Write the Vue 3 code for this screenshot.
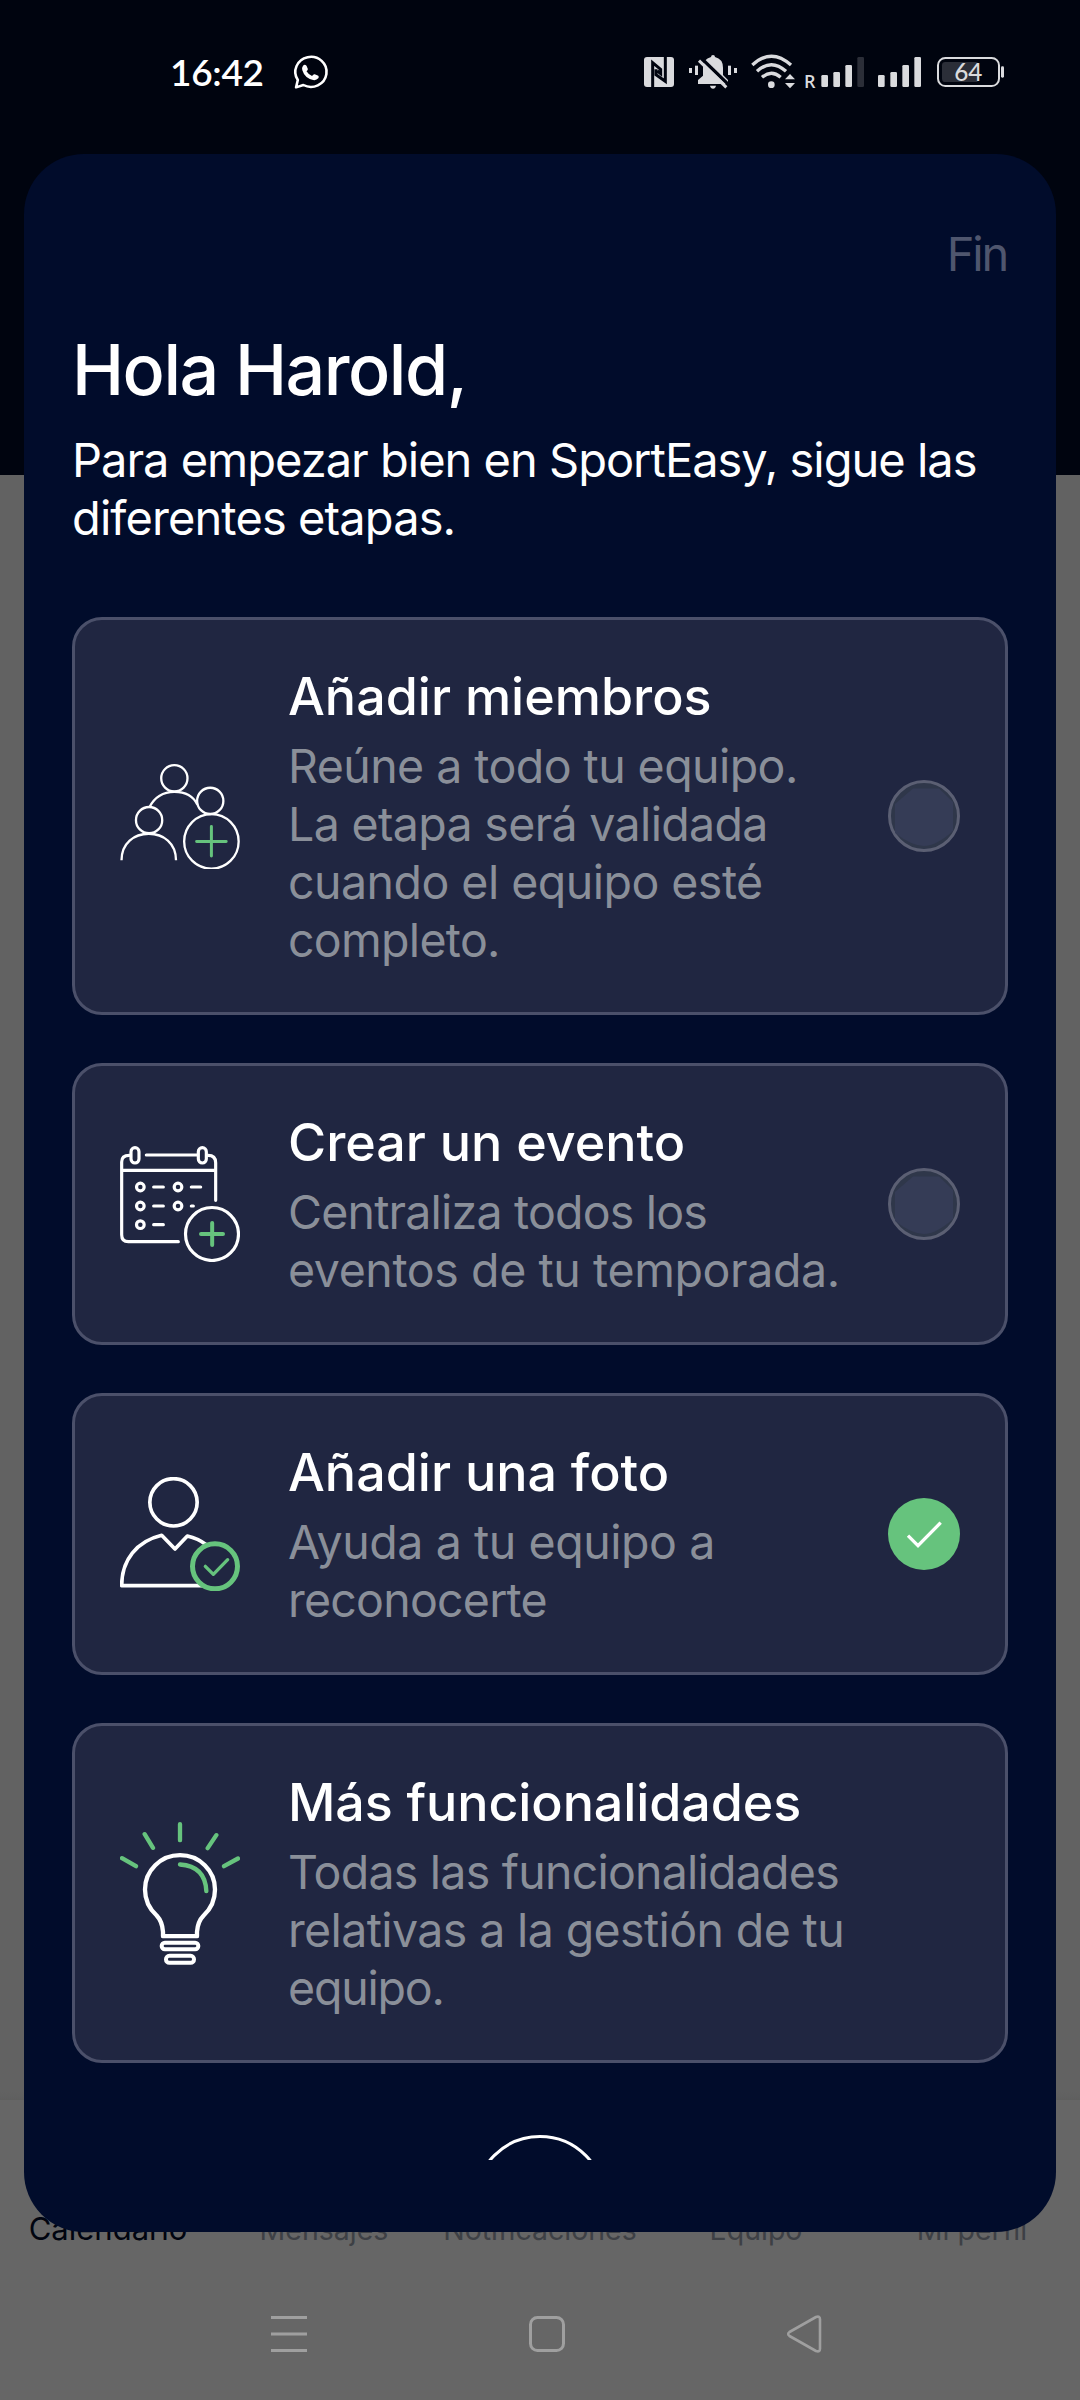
<script setup>
const steps = [
  {
    icon: 'members',
    title: { text: 'Añadir miembros', ls: 0 },
    lines: [
      { text: 'Reúne a todo tu equipo.', ls: -0.56 },
      { text: 'La etapa será validada', ls: -0.66 },
      { text: 'cuando el equipo esté', ls: -0.53 },
      { text: 'completo.', ls: -0.7 }
    ],
    state: 'todo'
  },
  {
    icon: 'event',
    title: { text: 'Crear un evento', ls: 0 },
    lines: [
      { text: 'Centraliza todos los', ls: -0.8 },
      { text: 'eventos de tu temporada.', ls: -0.4 }
    ],
    state: 'todo'
  },
  {
    icon: 'photo',
    title: { text: 'Añadir una foto', ls: 0 },
    lines: [
      { text: 'Ayuda a tu equipo a', ls: -0.43 },
      { text: 'reconocerte', ls: -0.77 }
    ],
    state: 'done'
  },
  {
    icon: 'more',
    title: { text: 'Más funcionalidades', ls: -0.1 },
    lines: [
      { text: 'Todas las funcionalidades', ls: -0.77 },
      { text: 'relativas a la gestión de tu', ls: -0.62 },
      { text: 'equipo.', ls: -1.2 }
    ],
    state: 'none'
  }
]
const tabs = ['Calendario', 'Mensajes', 'Notificaciones', 'Equipo', 'Mi perfil']
const spacing = (line) => ({ letterSpacing: line.ls + 'px' })
</script>

<template>
  <div class="screen">
    <header class="top">
      <div class="status">
        <span class="clock">16:42</span>
        <svg class="whatsapp" viewBox="855 165 98 102" width="34" height="34" preserveAspectRatio="none">
          <path d="M861 262 L866 240 A45 45 0 1 1 882 255 Z" fill="none" stroke="#fff" stroke-width="7.5" stroke-linejoin="round" />
          <path d="M881 197 q5 -5 10 0 l4 10 q0 4 -4 7 q6 10 16 14 q4 -6 8 -5 l10 4 q3 3 0 8 q-6 7 -15 5 q-24 -5 -31 -29 q-2 -9 2 -14z" fill="#fff" />
        </svg>
        <div class="indicators">
          <svg class="nfc" viewBox="132 72 90 108" width="30" height="36">
            <rect x="132" y="81" width="90" height="90" rx="9" fill="#dadbde" />
            <path d="M158 171 V98 L182 118 V131 L172 123 M196 81 V154 L168 134 V118" fill="none" stroke="#00040f" stroke-width="9" />
          </svg>
          <svg class="bell" viewBox="267 72 144 108" width="48" height="36">
            <g fill="#dadbde">
              <rect x="267" y="114" width="9" height="15" />
              <rect x="285" y="107" width="9" height="28" />
              <rect x="384" y="107" width="9" height="28" />
              <rect x="402" y="114" width="9" height="15" />
              <path d="M333 81 q0 -6 6 -6 q6 0 6 6 q24 6 24 32 v22 l15 15 v12 H294 v-12 l15 -13 v-24 q0 -26 24 -32z" />
              <path d="M330 167 h18 q-2 9 -9 9 t-9 -9z" />
            </g>
            <path d="M300 81 L388 166" stroke="#00040f" stroke-width="10" />
            <path d="M297 92 L379 172" stroke="#dadbde" stroke-width="9" />
          </svg>
          <svg class="wifi" viewBox="453 72 132 108" width="44" height="36">
            <g fill="none" stroke="#dadbde" stroke-width="10">
              <path d="M457 105 Q514 52 573 105" />
              <path d="M471 124 Q514 84 558 124" />
              <path d="M486 142 Q514 118 542 142" />
            </g>
            <circle cx="514" cy="164" r="10" fill="#dadbde" />
            <path d="M555 148 L570 132 L585 148z M555 159 H585 L570 175z" fill="#dadbde" />
          </svg>
          <svg class="bars-r" viewBox="612 72 180 108" width="60" height="36">
            <text x="612" y="175" class="roam">R</text>
            <g fill="#dadbde">
              <rect x="664" y="135" width="20" height="36" rx="4" />
              <rect x="700" y="126" width="20" height="45" rx="4" />
              <rect x="736" y="105" width="20" height="66" rx="4" />
            </g>
            <rect x="772" y="81" width="20" height="90" rx="4" fill="#2b2e38" />
          </svg>
          <svg class="bars" viewBox="834 72 129 108" width="43" height="36">
            <g fill="#dadbde">
              <rect x="834" y="135" width="20" height="36" rx="4" />
              <rect x="871" y="126" width="20" height="45" rx="4" />
              <rect x="907" y="105" width="20" height="66" rx="4" />
              <rect x="943" y="81" width="20" height="90" rx="4" />
            </g>
          </svg>
          <svg class="battery" viewBox="1011 72 201 108" width="67" height="36">
            <rect x="1014" y="84" width="183" height="84" rx="22" fill="none" stroke="#dadbde" stroke-width="6" />
            <rect x="1026" y="96" width="110" height="60" rx="10" fill="#2b2e38" />
            <rect x="1203" y="109" width="9" height="34" rx="4" fill="#dadbde" />
            <text x="1105" y="153" text-anchor="middle" class="level">64</text>
          </svg>
        </div>
      </div>
    </header>
    <main class="page"></main>
    <footer class="bottom">
      <nav class="tabs">
        <span v-for="(tab, i) in tabs" :key="tab" class="tab" :class="{ active: i === 0 }">{{ tab }}</span>
      </nav>
      <div class="system">
        <svg width="38" height="42" viewBox="0 0 38 42">
          <path d="M1 4.5H37M1 21H37M1 37.5H37" stroke="#9f9f9f" stroke-width="3" />
        </svg>
        <svg width="38" height="42" viewBox="0 0 38 42">
          <rect x="2.5" y="4.5" width="33" height="33" rx="7" fill="none" stroke="#9f9f9f" stroke-width="3" />
        </svg>
        <svg width="38" height="42" viewBox="0 0 38 42">
          <path d="M3.5 19 L30 4 Q34 2.500 34 6.500 V35.500 Q34 39.500 30 38 L3.500 23 Q0.800 21 3.500 19Z" fill="none" stroke="#9f9f9f" stroke-width="2.600" stroke-linejoin="round" />
        </svg>
      </div>
    </footer>

    <section class="sheet">
      <div class="scroll">
        <div class="finish">Fin</div>
        <h1 class="hello">Hola Harold,</h1>
        <p class="intro"><span class="i1">Para empezar bien en SportEasy, sigue las</span><span class="i2">diferentes etapas.</span></p>
        <div class="cards">
          <article v-for="step in steps" :key="step.icon" class="card">
            <div class="icon">
              <svg v-if="step.icon === 'members'" viewBox="180 188 360 316" width="120" height="105" fill="none" stroke="#fff" stroke-width="7">
                <circle cx="343" cy="231" r="39.500" />
                <circle cx="267" cy="357" r="39.500" />
                <circle cx="451" cy="299" r="39.500" />
                <circle cx="454.500" cy="421" r="82" />
                <path d="M184 478 C184 426 222 398 266 398 S348 426 348 478" />
                <path d="M268 318 Q292 272 343 272 T412 310" />
                <path d="M454.500 376V465M410 421H499" stroke="#66c37d" stroke-width="9" stroke-linecap="round" />
              </svg>
              <svg v-else-if="step.icon === 'event'" viewBox="180 138 360 348" width="120" height="116" fill="none" stroke="#fff" stroke-width="9.500" stroke-linecap="round" stroke-linejoin="round">
                <path d="M208 166 Q185 166 185 186 V404 Q185 425 205 425 H355" />
                <path d="M259 165H411M444 166Q467 166 467 188V301M187 211H465" />
                <rect x="213" y="143" width="24" height="46" rx="12" />
                <rect x="415" y="143" width="24" height="46" rx="12" />
                <circle cx="241" cy="261" r="11.500" /><circle cx="354" cy="261" r="11.500" />
                <circle cx="241" cy="318" r="11.500" /><circle cx="354" cy="318" r="11.500" />
                <circle cx="241" cy="374" r="11.500" />
                <path d="M281 261H310M394 261H422M281 318H310M394 318H400M281 374H310" />
                <circle cx="456" cy="402" r="79.500" />
                <path d="M456.500 369V435M423 402H489" stroke="#66c37d" stroke-width="12" />
              </svg>
              <svg v-else-if="step.icon === 'photo'" viewBox="180 141 360 342" width="120" height="114" fill="none" stroke="#fff" stroke-width="11" stroke-linecap="round" stroke-linejoin="round">
                <circle cx="340.500" cy="217" r="71" />
                <path d="M440 345 Q414 325 382 318 L345 357 L305 316 C230 334 185 390 185 467 H440" />
                <circle cx="465" cy="409" r="67.500" fill="#202641" stroke="#66c37d" stroke-width="15" />
                <path d="M436 409L460 433L503 389" stroke="#66c37d" stroke-width="10" />
              </svg>
              <svg v-else viewBox="180 126 360 428" width="120" height="143" fill="none" stroke="#fff" stroke-width="13" stroke-linejoin="round">
                <path d="M309 468 V455 Q307 424 290 406 Q255 374 255 328 A105 103 0 0 1 465 328 Q465 374 431 406 Q413 424 411 455 V468 Z" />
                <rect x="305" y="488" width="110" height="19" rx="9.500" stroke-width="12" />
                <rect x="318" y="527" width="84" height="21" rx="10" stroke-width="12" />
                <path d="M360 132V180M254 162L279 203M469 165L443 204M186 234L228 258M534 235L492 258M360 253Q436 258 439 333" stroke="#66c37d" stroke-width="13" stroke-linecap="round" />
              </svg>
            </div>
            <div class="body">
              <h2 class="title"><span :style="spacing(step.title)">{{ step.title.text }}</span></h2>
              <p class="desc">
                <span v-for="line in step.lines" :key="line.text" :style="spacing(line)">{{ line.text }}</span>
              </p>
            </div>
            <div class="state">
              <svg v-if="step.state === 'todo'" viewBox="0 0 72 72" width="72" height="72">
                <circle cx="36" cy="36" r="34.500" fill="#2f374a" stroke="#5b5f73" stroke-width="3" />
                <path d="M25 8.500 H51 L65 22 V51 Q48 66 36 66 Q24 66 7 53 V24Z" fill="#353c56" />
              </svg>
              <svg v-else-if="step.state === 'done'" viewBox="84 144 216 216" width="72" height="72">
                <circle cx="192" cy="252" r="108" fill="#66c37d" />
                <path d="M144 257L174 287L242 218" fill="none" stroke="#fff" stroke-width="10" />
              </svg>
            </div>
          </article>
        </div>
        <div class="close"></div>
      </div>
    </section>
  </div>
</template>

<style>
body { margin: 0; }
</style>

<style scoped>
.screen {
  position: relative;
  width: 1080px;
  height: 2400px;
  overflow: hidden;
  display: flex;
  flex-direction: column;
  background: #626262;
  font-family: Inter, "Liberation Sans", sans-serif;
}
.top { height: 475px; background: #00040f; }
.page { flex: 1; background: linear-gradient(#626262 99.500%, #5f5f5f); }
.bottom { height: 300px; background: #666; display: flex; flex-direction: column; }
.status {
  height: 144px;
  box-sizing: border-box;
  padding: 0 76px 0 170px;
  display: flex;
  align-items: center;
}
.status svg { overflow: visible; }
.clock { color: #fff; font: 600 37px/40px Lato, Inter, sans-serif; letter-spacing: -0.3px; width: 95px; white-space: nowrap; }
.whatsapp { margin-left: 29px; }
.indicators { margin-left: auto; display: flex; align-items: center; }
.bell { margin-left: 15px; }
.wifi { margin-left: 14px; }
.bars-r { margin-left: 9px; }
.bars { margin-left: 14px; }
.battery { margin-left: 16px; }
.roam { font: 600 54px "Open Sans", sans-serif; fill: #dadbde; }
.level { font: 500 73px Lato, sans-serif; fill: #dadbde; }
.tabs { display: flex; height: 80px; margin-top: 89px; }
.tab {
  flex: 1;
  text-align: center;
  font-size: 28.500px;
  line-height: 82px;
  color: #3d4045;
  white-space: nowrap;
}
.tab.active { color: #00040f; font-size: 31px; line-height: 80px; }
.system { display: flex; justify-content: space-between; margin: 44px 256px 0 270px; }
.sheet {
  position: absolute;
  left: 24px;
  top: 154px;
  width: 1032px;
  height: 2078px;
  box-sizing: border-box;
  padding: 72px 48px;
  border-radius: 60px;
  background: #010c2b;
}
.scroll { height: 1934px; overflow: hidden; color: #fff; }
.finish { text-align: right; font-size: 47px; line-height: 56px; color: #4f566e; letter-spacing: -2.200px; padding-right: 1px; }
.hello { margin: 45px 0 0; font-size: 70px; line-height: 86px; font-weight: 500; letter-spacing: -1.500px; white-space: nowrap; }
.intro { margin: 18px 0 0; font-size: 47px; line-height: 58px; }
.i1 { letter-spacing: -1px; }
.i2 { letter-spacing: -0.900px; }
.intro span, .desc span { display: block; white-space: nowrap; width: max-content; }
.cards { margin-top: 70px; display: flex; flex-direction: column; gap: 48px; }
.card {
  box-sizing: border-box;
  display: flex;
  align-items: center;
  padding: 43px 45px;
  border: 3px solid #4b506a;
  border-radius: 30px;
  background: #202641;
}
.icon { width: 168px; flex: none; display: flex; }
.body { flex: 1; min-width: 0; padding-top: 2px; }
.title { margin: 0; font-size: 52px; line-height: 64px; font-weight: 500; white-space: nowrap; }
.desc { margin: 8px 0 0; font-size: 46.500px; line-height: 58px; color: #8a8f99; }
.state { width: 72px; flex: none; display: flex; }
.close {
  box-sizing: border-box;
  width: 132px;
  height: 132px;
  margin: 72px auto 0;
  border: 3px solid #fff;
  border-radius: 50%;
}
</style>
